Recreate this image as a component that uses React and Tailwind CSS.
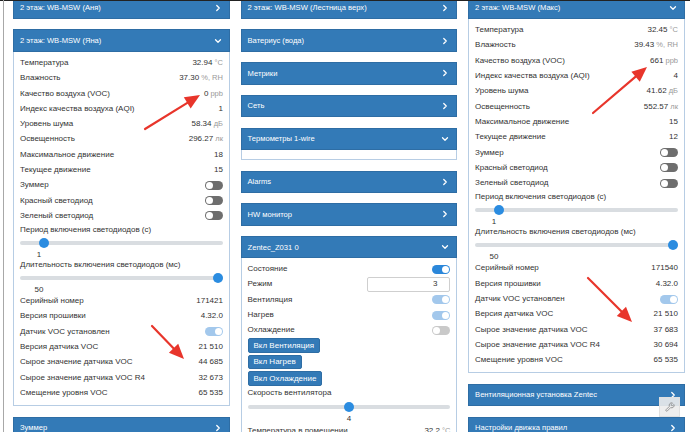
import React from "react";
import { ChevronRight, ChevronDown, Wrench } from "lucide-react";

function Header({ title, open }) {
  return (
    <div className="h-[22.4px] shrink-0 bg-[#337ab7] border border-[#2e6da4] flex items-center justify-between pl-[6px] pr-[6px] text-white text-[7.6px]">
      <span>{title}</span>
      {open ? (
        <ChevronDown size={10} strokeWidth={3} className="text-white" />
      ) : (
        <ChevronRight size={10} strokeWidth={3} className="text-white" />
      )}
    </div>
  );
}

function Toggle({ kind }) {
  const track =
    kind === "off"
      ? "bg-[#6e6e6e] justify-start"
      : kind === "offLight"
      ? "bg-[#c9c9c9] justify-start"
      : kind === "on"
      ? "bg-[#2b87da] justify-end"
      : "bg-[#a3c8ec] justify-end";
  return (
    <div className={"w-[18px] h-[9px] rounded-full flex items-center px-[1px] " + track}>
      <div className="w-[7px] h-[7px] rounded-full bg-white" />
    </div>
  );
}

function Row({ label, value, unit, toggle }) {
  return (
    <div className="h-[15.3px] flex items-center justify-between">
      <span>{label}</span>
      {toggle ? (
        <Toggle kind={toggle} />
      ) : (
        <span>
          {value}
          {unit ? <span className="text-[#999] text-[7.5px]"> {unit}</span> : null}
        </span>
      )}
    </div>
  );
}

function Slider({ label, pct, value }) {
  return (
    <div>
      <div className="h-[11px] leading-[11px]">{label}</div>
      <div className="mt-[1px] h-[15px] flex items-center">
        <div className="relative w-full h-[4px] rounded-full bg-[#d9dde1]">
          <div
            className="absolute top-1/2 w-[10px] h-[10px] -mt-[5px] rounded-full bg-[#2b8ce0]"
            style={{ left: `calc(${pct}% - ${pct / 10}px)` }}
          />
        </div>
      </div>
      <div className="h-[8px] leading-[8px] w-[38px] text-center">{value}</div>
    </div>
  );
}

function SensorBody({ d }) {
  return (
    <div className="border border-t-0 border-[#b7cde4] px-[6px] pt-[3.5px] pb-[4.5px]">
      <Row label="Температура" value={d.t} unit="°C" />
      <Row label="Влажность" value={d.h} unit="%, RH" />
      <Row label="Качество воздуха (VOC)" value={d.voc} unit="ppb" />
      <Row label="Индекс качества воздуха (AQI)" value={d.aqi} />
      <Row label="Уровень шума" value={d.noise} unit="дБ" />
      <Row label="Освещенность" value={d.lux} unit="лк" />
      <Row label="Максимальное движение" value={d.maxm} />
      <Row label="Текущее движение" value={d.curm} />
      <Row label="Зуммер" toggle="off" />
      <Row label="Красный светодиод" toggle="off" />
      <Row label="Зеленый светодиод" toggle="off" />
      <Slider label="Период включения светодиодов (с)" pct={10} value="1" />
      <Slider label="Длительность включения светодиодов (мс)" pct={100} value="50" />
      <Row label="Серийный номер" value={d.sn} />
      <Row label="Версия прошивки" value="4.32.0" />
      <Row label="Датчик VOC установлен" toggle="onLight" />
      <Row label="Версия датчика VOC" value="21 510" />
      <Row label="Сырое значение датчика VOC" value={d.raw} />
      <Row label="Сырое значение датчика VOC R4" value={d.r4} />
      <Row label="Смещение уровня VOC" value="65 535" />
    </div>
  );
}

function Btn({ children }) {
  return (
    <div className="self-start h-[14.5px] px-[5px] flex items-center rounded-[2px] bg-[#337ab7] border border-[#2e6da4] text-white">
      {children}
    </div>
  );
}

function Arrow({ x1, y1, x2, y2 }) {
  const dx = x2 - x1;
  const dy = y2 - y1;
  const len = Math.sqrt(dx * dx + dy * dy);
  const ux = dx / len;
  const uy = dy / len;
  const nx = -uy;
  const ny = ux;
  const L = 15;
  const W = 13;
  const bx = x2 - ux * L;
  const by = y2 - uy * L;
  const pts = `${x2},${y2} ${bx + (nx * W) / 2},${by + (ny * W) / 2} ${bx - (nx * W) / 2},${by - (ny * W) / 2}`;
  return (
    <g>
      <line x1={x1} y1={y1} x2={bx + ux * 2} y2={by + uy * 2} stroke="#e8352b" strokeWidth="2.2" strokeLinecap="round" />
      <polygon points={pts} fill="#e8352b" />
    </g>
  );
}

export default function App() {
  const yana = {
    t: "32.94",
    h: "37.30",
    voc: "0",
    aqi: "1",
    noise: "58.34",
    lux: "296.27",
    maxm: "18",
    curm: "15",
    sn: "171421",
    raw: "44 685",
    r4: "32 673",
  };
  const maks = {
    t: "32.45",
    h: "39.43",
    voc: "661",
    aqi: "4",
    noise: "41.62",
    lux: "552.57",
    maxm: "15",
    curm: "12",
    sn: "171540",
    raw: "37 683",
    r4: "30 694",
  };
  return (
    <div
      className="relative w-[690px] h-[432px] overflow-hidden bg-white text-[#333] text-[8px]"
      style={{ fontFamily: '"Liberation Sans", Arial, sans-serif' }}
    >
      <div className="flex items-start pl-[13px] pr-[5px] gap-[10.6px] mt-[-3.4px]">
        {/* Left column */}
        <div className="flex-1 flex flex-col gap-[10.4px]">
          <Header title="2 этаж: WB-MSW (Аня)" />
          <div className="flex flex-col">
            <Header title="2 этаж: WB-MSW (Яна)" open />
            <SensorBody d={yana} />
          </div>
          <Header title="Зуммер" />
        </div>

        {/* Middle column */}
        <div className="flex-1 flex flex-col gap-[10.4px]">
          <Header title="2 этаж: WB-MSW (Лестница верх)" />
          <Header title="Ватериус (вода)" />
          <Header title="Метрики" />
          <Header title="Сеть" />
          <div className="flex flex-col">
            <Header title="Термометры 1-wire" open />
            <div className="h-[10px] border border-t-0 border-[#b7cde4]" />
          </div>
          <Header title="Alarms" />
          <Header title="HW монитор" />
          <div className="flex flex-col">
            <Header title="Zentec_Z031 0" open />
            <div className="border border-t-0 border-[#b7cde4] px-[6px] pt-[3px] pb-[6px] flex flex-col">
              <Row label="Состояние" toggle="on" />
              <div className="h-[15.3px] flex items-center justify-between">
                <span>Режим</span>
                <div className="w-[83px] h-[15px] border border-[#cfcfcf] rounded-[2px] flex items-center justify-end pr-[12px]">
                  3
                </div>
              </div>
              <Row label="Вентиляция" toggle="onLight" />
              <Row label="Нагрев" toggle="onLight" />
              <Row label="Охлаждение" toggle="offLight" />
              <div className="mt-[0.5px] flex flex-col gap-[2px]">
                <Btn>Вкл Вентиляция</Btn>
                <Btn>Вкл Нагрев</Btn>
                <Btn>Вкл Охлаждение</Btn>
              </div>
              <div className="mt-[1px] h-[12px] leading-[12px]">Скорость вентилятора</div>
              <div className="mt-[1px] h-[15px] flex items-center">
                <div className="relative w-full h-[4px] rounded-full bg-[#d9dde1]">
                  <div className="absolute top-1/2 left-[calc(50%-5px)] w-[10px] h-[10px] -mt-[5px] rounded-full bg-[#2b8ce0]" />
                </div>
              </div>
              <div className="h-[8px] leading-[8px] text-center">4</div>
              <Row label="Температура в помещении" value="32.2" unit="°C" />
            </div>
          </div>
        </div>

        {/* Right column */}
        <div className="flex-1 flex flex-col gap-[10.4px]">
          <div className="flex flex-col">
            <Header title="2 этаж: WB-MSW (Макс)" open />
            <SensorBody d={maks} />
          </div>
          <Header title="Вентиляционная установка Zentec" />
          <Header title="Настройки движка правил" />
        </div>
      </div>

      {/* Screenshot frame details */}
      <div className="absolute left-0 top-0 w-full h-[1px] bg-[#222]" />
      <div className="absolute left-[3px] top-0 w-[1px] h-full bg-[#a8a8a8]" />

      {/* Floating wrench button */}
      <div className="absolute left-[659px] top-[397px] w-[21px] h-[20px] bg-[#ececec]/90 border border-[#e0e0e0] flex items-center justify-center">
        <Wrench size={10} strokeWidth={2} className="text-[#8a8a8a]" />
      </div>

      {/* Annotation arrows */}
      <svg className="absolute inset-0 pointer-events-none" width="690" height="432" viewBox="0 0 690 432">
        <Arrow x1={145} y1={129} x2={200} y2={95} />
        <Arrow x1={152} y1={326} x2={184} y2={359} />
        <Arrow x1={593} y1={113} x2={647} y2={67} />
        <Arrow x1={588} y1={278} x2={632} y2={322} />
      </svg>
    </div>
  );
}
